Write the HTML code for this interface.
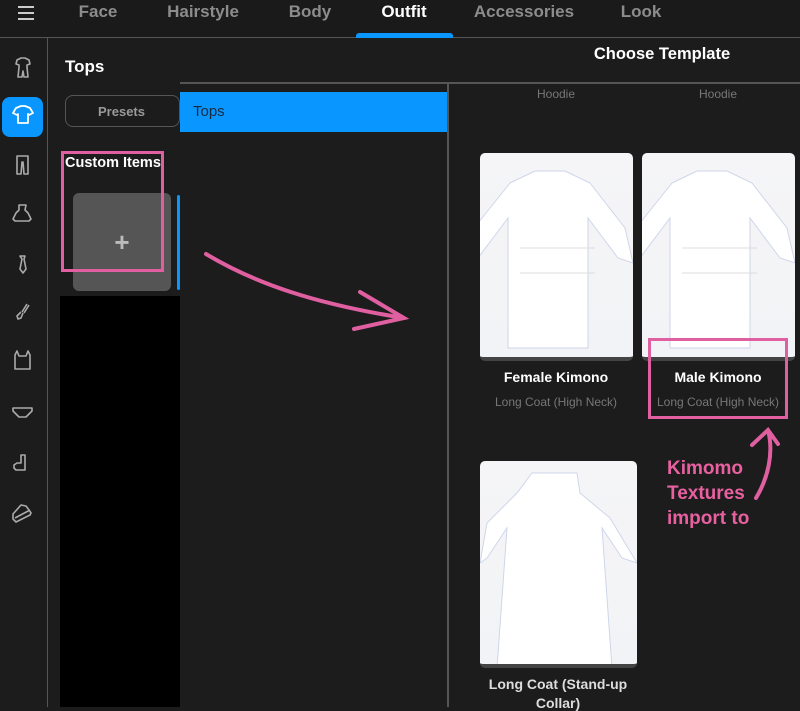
<!DOCTYPE html>
<html><head><meta charset="utf-8"><style>
*{margin:0;padding:0;box-sizing:border-box}
body{width:800px;height:707px;background:#1c1c1c;font-family:"Liberation Sans",sans-serif;position:relative;overflow:hidden;color:#fff}
.a{position:absolute}
.tab{position:absolute;top:2px;font-size:17px;font-weight:bold;color:#8c8c8c;transform:translateX(-50%);white-space:nowrap}
.c{position:absolute;transform:translateX(-50%);white-space:nowrap;text-align:center}
.card{position:absolute;background:linear-gradient(#f5f5f7,#f2f3f6);border-radius:5px;overflow:hidden;border-bottom:4px solid #444}
</style></head><body>
<div class="a" style="left:0;top:0;width:800px;height:37px;background:#1a1a1a"></div>
<div class="a" style="left:0;top:37px;width:800px;height:1px;background:#555"></div>
<div class="a" style="left:18px;top:6px;width:16px;height:2px;background:#ccc;box-shadow:0 6px 0 #ccc,0 12px 0 #ccc"></div>
<div class="tab" style="left:98px">Face</div>
<div class="tab" style="left:203px">Hairstyle</div>
<div class="tab" style="left:310px">Body</div>
<div class="tab" style="left:404px;color:#fff">Outfit</div>
<div class="a" style="left:356px;top:33px;width:97px;height:5px;background:#0a96ff;border-radius:3px 3px 0 0"></div>
<div class="tab" style="left:524px">Accessories</div>
<div class="tab" style="left:641px">Look</div>
<div class="a" style="left:47px;top:38px;width:1px;height:669px;background:#555"></div>
<div class="a" style="left:2px;top:97px;width:41px;height:40px;background:#0a96ff;border-radius:8px"></div>
<svg class="a" style="left:0;top:0" width="47" height="707" fill="none" stroke="#aaa" stroke-width="1.6" stroke-linejoin="round">
<path d="M17 60l4-2h4l4 2 1 4-3 1v2l1 10h-4l-1-6-1 6h-4l1-10v-2l-3-1z"/>
<path d="M16 108l5-2h4l5 2 3 5-4 2-1-1v9h-10v-9l-1 1-4-2z" stroke="#fff" stroke-width="1.8"/>
<path d="M17 156h11v3l0 15h-4l-1-12h-1l-1 12h-4l0-15z"/>
<path d="M19 205h7l-1 5 3 3 3 6-2 2h-14l-2-2 3-6 3-3z"/>
<path d="M20 256h5l-1 3 2 10-3 4-3-4 2-10z"/>
<path d="M29 305l-5 8M27 304l-5 8M21 312l-4 4 1 3 3-1 2-5"/>
<path d="M15 355l2-4 2 5h7l2-5 2 4v14h-15z"/>
<path d="M13 408h19v3l-6 6h-7l-6-6z"/>
<path d="M25 455v15h-9l-2-2v-3l3-2h4v-8z"/>
<path d="M13 514l8-9 5 1 3 4 2 3-1 2-14 7-3-3zM15 518l15-8"/>
</svg>
<div class="a" style="left:65px;top:57px;font-size:17px;font-weight:bold">Tops</div>
<div class="a" style="left:65px;top:95px;width:115px;height:32px;border:1.5px solid #555;border-radius:8px;color:#999;font-size:13px;font-weight:bold;padding:8px 0 0 32px">Presets</div>
<div class="a" style="left:65px;top:155px;font-size:14.5px;font-weight:bold">Custom Items</div>
<div class="a" style="left:73px;top:193px;width:98px;height:98px;background:#555;border-radius:6px;color:#bbb;font-size:26px;font-weight:bold;text-align:center;line-height:98px">+</div>
<div class="a" style="left:177px;top:195px;width:3px;height:95px;background:#0a96ff;border-radius:2px"></div>
<div class="a" style="left:60px;top:296px;width:120px;height:411px;background:#000"></div>
<div class="a" style="left:180px;top:38px;width:620px;height:669px;background:#1c1c1c"></div>
<div class="a" style="left:180px;top:82px;width:620px;height:1.5px;background:#555"></div>
<div class="c" style="left:662px;top:45px;font-size:16.5px;font-weight:bold">Choose Template</div>
<div class="a" style="left:180px;top:92px;width:267px;height:40px;background:#0a96ff;color:#1a2a3a;font-size:15px;padding:11px 0 0 13px">Tops</div>
<div class="a" style="left:447px;top:83px;width:1.5px;height:624px;background:#555"></div>
<div class="c" style="left:556px;top:87px;font-size:12px;color:#777">Hoodie</div>
<div class="c" style="left:718px;top:87px;font-size:12px;color:#777">Hoodie</div>
<div class="card" style="left:480px;top:153px;width:153px;height:208px"><svg width="153" height="204"><path d="M30 30l25-12 30 0 25 12 35 45 8 35-15-5-30-40v130h-80v-130l-30 40-10 5 10-40z" fill="#fff" stroke="#cfd6ea"/><path d="M40 120h75M40 95h75" stroke="#ddd"/></svg></div>
<div class="card" style="left:642px;top:153px;width:153px;height:208px"><svg width="153" height="204"><path d="M30 30l25-12 30 0 25 12 35 45 8 35-15-5-30-40v130h-80v-130l-30 40-10 5 10-40z" fill="#fff" stroke="#cfd6ea"/><path d="M40 120h75M40 95h75" stroke="#ddd"/></svg></div>
<div class="c" style="left:556px;top:369px;font-size:14px;font-weight:bold">Female Kimono</div>
<div class="c" style="left:556px;top:395px;font-size:12px;color:#777">Long Coat (High Neck)</div>
<div class="c" style="left:718px;top:369px;font-size:14px;font-weight:bold">Male Kimono</div>
<div class="c" style="left:718px;top:395px;font-size:12px;color:#777">Long Coat (High Neck)</div>
<div class="card" style="left:480px;top:461px;width:157px;height:207px"><svg width="157" height="203"><path d="M52 12h45l3 20 30 25 27 45-15-5-20-30 10 140h-115l10-140-20 30-7 5 7-40 30-30z" fill="#fff" stroke="#cfd6ea"/></svg></div>
<div class="c" style="left:558px;top:676px;font-size:14px;font-weight:bold;color:#ddd">Long Coat (Stand-up</div>
<div class="c" style="left:558px;top:695px;font-size:14px;font-weight:bold;color:#ddd">Collar)</div>
<div class="a" style="left:61px;top:151px;width:103px;height:121px;border:3px solid #e05fa0"></div>
<div class="a" style="left:648px;top:338px;width:140px;height:81px;border:3px solid #e05fa0"></div>
<svg class="a" style="left:0;top:0" width="800" height="707" fill="none" stroke="#e05fa0" stroke-width="4" stroke-linecap="round">
<path d="M206 254c50 30 110 50 198 64M360 292l44 26-50 11"/>
<path d="M756 498c12-20 18-45 12-68M752 445l16-15 10 14"/>
</svg>
<div class="a" style="left:667px;top:456px;font-size:19px;font-weight:bold;color:#e8609f;line-height:25px">Kimomo<br>Textures<br>import to</div>
</body></html>
